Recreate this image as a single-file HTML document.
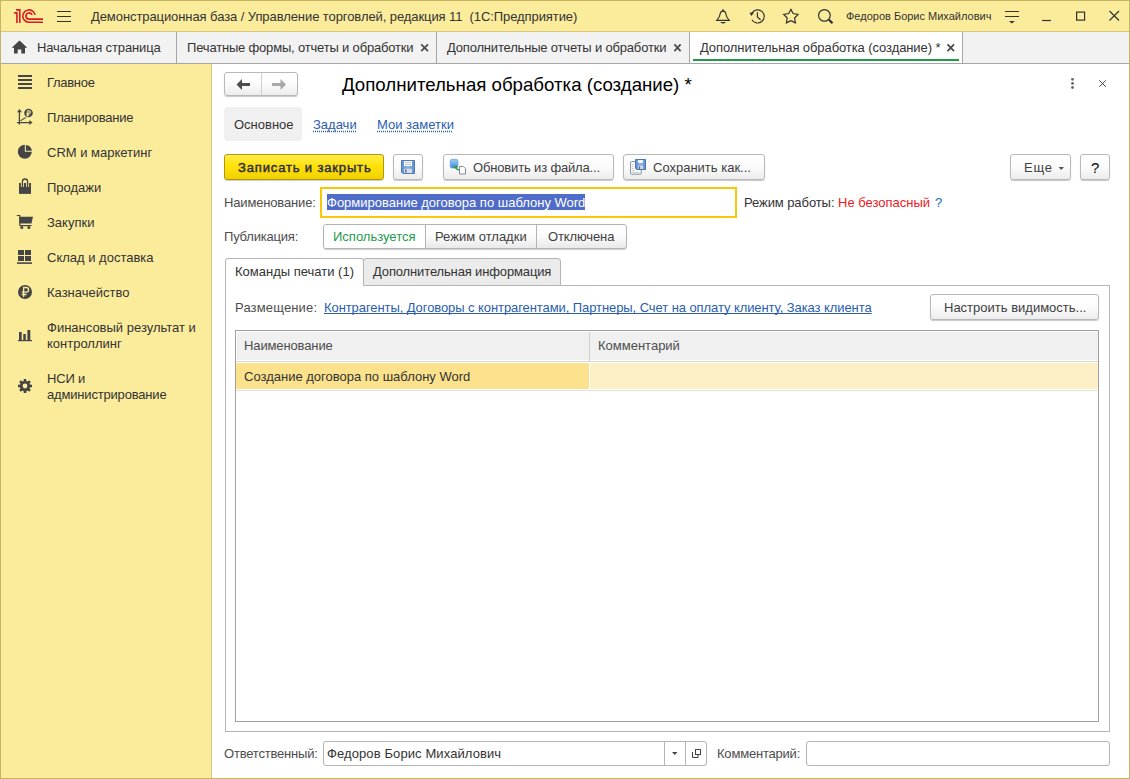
<!DOCTYPE html>
<html><head><meta charset="utf-8">
<style>
*{box-sizing:border-box;margin:0;padding:0}
html,body{width:1130px;height:779px;overflow:hidden;background:#fff}
body{font-family:"Liberation Sans",sans-serif;font-size:13px;line-height:15px;color:#333;position:relative}
.a{position:absolute;white-space:nowrap}
svg.a{overflow:visible}
#win{position:absolute;left:0;top:0;width:1130px;height:779px;border:1px solid #c6b563;pointer-events:none}
#title{position:absolute;left:0;top:0;width:1130px;height:32px;background:#fbec9c;border-bottom:1px solid #d9c77f}
#tabs{position:absolute;left:0;top:32px;width:1130px;height:32px;background:#f2f2f2;border-bottom:1px solid #a6a6a6}
#side{position:absolute;left:0;top:64px;width:212px;height:715px;background:#fbec9c;border-right:1px solid #d5c57d}
.sep{position:absolute;top:0;width:1px;height:31px;background:#a6a6a6}
.tt{position:absolute;top:8px;white-space:nowrap;color:#333}
.x{position:absolute;top:7px;font-size:15px;color:#4a4a4a}
.si{position:absolute;left:47px;color:#333;line-height:16px;white-space:nowrap}
.btn{position:absolute;border:1px solid #b8b8b8;border-radius:3px;background:linear-gradient(#ffffff 0%,#fbfbfb 50%,#ececec 100%);box-shadow:0 1px 1px rgba(0,0,0,.22);color:#333;white-space:nowrap}
.link{color:#2a5db0;text-decoration:underline;text-decoration-skip-ink:none}
.dlink{color:#2a5db0;text-decoration:underline dotted;text-underline-offset:2px;text-decoration-skip-ink:none}
</style></head>
<body>
<div id="title">
  <svg class="a" style="left:0;top:0" width="50" height="32" viewBox="0 0 50 32">
    <g fill="none" stroke="#d81d22" stroke-width="1.6" stroke-linecap="butt">
      <path d="M14.1,12.9 H16.9 V23"/>
      <path d="M16.1,9.9 H19.8 V23"/>
      <path d="M35.08,14.92 A6.2,6.2 0 1 0 29,22.3 H43"/>
      <path d="M32.09,15.11 A3.13,3.13 0 1 0 29.1,19.16 H43"/>
    </g>
  </svg>
  <svg class="a" style="left:0;top:0" width="90" height="32">
    <g stroke="#333" stroke-width="1.1">
      <path d="M57,11.5 H71 M57,16.5 H71 M57,21.5 H71"/>
    </g>
  </svg>
  <div class="a" style="left:91px;top:9px;color:#333;letter-spacing:-0.08px">Демонстрационная база / Управление торговлей, редакция 11&nbsp; (1С:Предприятие)</div>
  <!-- bell -->
  <svg class="a" style="left:0;top:0" width="1130" height="32">
    <g fill="none" stroke="#333" stroke-width="1.2">
      <path d="M716.8,20.3 C718.6,18.3 719.9,16.6 720.2,13.8 C720.4,12 721.4,11.2 723,11.2 C724.6,11.2 725.6,12 725.8,13.8 C726.1,16.6 727.4,18.3 729.2,20.3 Z"/>
      <!-- history -->
      <path d="M751.9,19.7 A6.6,6.6 0 1 0 752.2,12.6"/>
      <path d="M757.4,12.2 V16.9 L760.6,19.8"/>
      <!-- star -->
      <path d="M790.9,9.4 L793.1,13.5 L798.1,14.4 L794.6,18 L795.4,22.9 L790.9,20.6 L786.4,22.9 L787.2,18 L783.7,14.4 L788.7,13.5 Z"/>
      <!-- search -->
      <circle cx="824.4" cy="15.4" r="5.8"/>
    </g>
    <g fill="#333">
      <path d="M720.2,22 H726 Q723.1,25.2 720.2,22 Z"/>
      <circle cx="723" cy="10.2" r="1"/>
      <path d="M749.4,12.7 L754.2,12.3 L751.5,16 Z"/>
      <path d="M828.2,20.6 L829.8,19 L833.3,22.5 L831.7,24.1 Z"/>
      <path d="M1009,21 H1014.8 L1011.9,23.6 Z"/>
    </g>
    <g stroke="#333" stroke-width="1.2" fill="none">
      <path d="M1005,11.5 H1019 M1005,16.5 H1019"/>
      <path d="M1042,20.5 H1051"/>
      <rect x="1076.6" y="12.1" width="8" height="8"/>
      <path d="M1109.5,11 L1119,20.5 M1119,11 L1109.5,20.5"/>
    </g>
  </svg>
  <div class="a" style="left:846px;top:9px;font-size:11px;color:#333">Федоров Борис Михайлович</div>
</div>

<div id="tabs">
  <svg class="a" style="left:0;top:0" width="40" height="31">
    <path fill="#444" d="M19.5,8.5 L27.3,15.8 H25 V21.5 H21.3 V17.5 H17.7 V21.5 H14 V15.8 H11.7 Z"/>
  </svg>
  <div class="tt" style="left:37px;letter-spacing:-0.12px">Начальная страница</div>
  <div class="sep" style="left:176px"></div>
  <div class="tt" style="left:187px;letter-spacing:-0.18px">Печатные формы, отчеты и обработки</div>
  
  <div class="sep" style="left:436px"></div>
  <div class="tt" style="left:447px;letter-spacing:-0.18px">Дополнительные отчеты и обработки</div>
  
  <div class="sep" style="left:689px"></div>
  <div class="a" style="left:690px;top:0;width:272px;height:31px;background:#fff"></div>
  <div class="a" style="left:693px;top:27px;width:266px;height:2px;background:#1f9a4a"></div>
  <svg class="a" style="left:0;top:0" width="1130" height="31">
    <g stroke="#4d4d4d" stroke-width="1.8">
      <path d="M421.2,12.3 L428,19.1 M428,12.3 L421.2,19.1"/>
      <path d="M674.4,12.3 L680.6,19.1 M680.6,12.3 L674.4,19.1"/>
      <path d="M947.5,12.3 L954,19.1 M954,12.3 L947.5,19.1"/>
    </g>
  </svg>
  <div class="tt" style="left:700px;letter-spacing:-0.09px">Дополнительная обработка (создание) *</div>
  
  <div class="sep" style="left:962px"></div>
</div>

<div id="side">
  <svg class="a" style="left:0;top:0" width="212" height="340">
    <g fill="#454545">
      <!-- Главное -->
      <rect x="18" y="11" width="14" height="2"/><rect x="18" y="15" width="14" height="2"/><rect x="18" y="19" width="14" height="2"/><rect x="18" y="23" width="14" height="2"/>
      <!-- CRM pie -->
      <path d="M24.8,80.8 A7,7 0 1 0 31.8,87.8 H24.8 Z"/>
      <path d="M25.9,80.9 A5.9,5.9 0 0 1 31.8,86.8 H25.9 Z"/>
      <!-- bag -->
      <path d="M19,119 H31 V129.9 H19 Z"/>
      <!-- cart -->
      <path d="M19.5,152.8 H33 L31.5,159.6 H19.5 Z"/>
      <rect x="19.5" y="161" width="12" height="1.2"/>
      <circle cx="21.8" cy="163.6" r="1.5"/><circle cx="28.8" cy="163.6" r="1.5"/>
      <!-- warehouse -->
      <rect x="18" y="186" width="6" height="5"/><rect x="25" y="186" width="6" height="5"/>
      <rect x="18" y="192" width="6" height="5"/><rect x="25" y="192" width="6" height="5"/>
      <rect x="17" y="198.3" width="15" height="1.6"/>
      <!-- ruble -->
      <circle cx="25" cy="228" r="7"/>
      <!-- chart -->
      <rect x="19" y="268" width="2.7" height="8.5"/><rect x="23.3" y="270" width="2.5" height="6.5"/><rect x="27.4" y="266" width="2.9" height="10.5"/>
      <rect x="18" y="276" width="14" height="1.2"/>
      <!-- gear -->
      <g transform="translate(25,322)">
        <circle r="5.2"/>
        <rect x="-1.3" y="-7" width="2.6" height="14"/>
        <rect x="-1.3" y="-7" width="2.6" height="14" transform="rotate(45)"/>
        <rect x="-1.3" y="-7" width="2.6" height="14" transform="rotate(90)"/>
        <rect x="-1.3" y="-7" width="2.6" height="14" transform="rotate(135)"/>
      </g>
    </g>
    <circle cx="25" cy="322" r="2.4" fill="#fbec9c"/>
    <!-- bag handle -->
    <path d="M22.4,123 V117.6 A2.6,2.6 0 0 1 27.6,117.6 V123" fill="none" stroke="#fbec9c" stroke-width="3"/>
    <path d="M22.4,123 V117.6 A2.6,2.6 0 0 1 27.6,117.6 V123" fill="none" stroke="#454545" stroke-width="1.3"/>
    <path d="M16.8,151.5 H19.8 V161.5" fill="none" stroke="#454545" stroke-width="1.2"/>
    <!-- ruble sign -->
    <path d="M23.6,233 V223.5 H26.3 A2.3,2.3 0 0 1 26.3,228.1 H21.8 M21.8,230.5 H26.5" fill="none" stroke="#fbec9c" stroke-width="1.3"/>
    <!-- planning -->
    <g fill="none" stroke="#454545" stroke-width="1.3">
      <path d="M19.4,46 V60.5 M17,58.6 H30.5"/>
      <path d="M20.4,56.5 H21.8 V55.5 H23.2 V54.5 H24.6 V53.8 H26" stroke-width="0.9"/>
    </g>
    <g fill="#454545">
      <path d="M19.5,45 L17,48.2 H22 Z"/>
      <path d="M32.5,58.5 L29.3,56 V61 Z"/>
      <circle cx="28.5" cy="49" r="4.3"/>
    </g>
    <path d="M27.7,52.4 V46.7 H29.1 A1.3,1.3 0 0 1 29.1,49.3 H26.4 M26.3,50.9 H29.4" fill="none" stroke="#fbec9c" stroke-width="1.1"/>
  </svg>
  <div class="si" style="top:11px;letter-spacing:-0.3px">Главное</div>
  <div class="si" style="top:46px;letter-spacing:-0.2px">Планирование</div>
  <div class="si" style="top:81px">CRM и маркетинг</div>
  <div class="si" style="top:116px">Продажи</div>
  <div class="si" style="top:151px">Закупки</div>
  <div class="si" style="top:186px">Склад и доставка</div>
  <div class="si" style="top:221px">Казначейство</div>
  <div class="si" style="top:256px">Финансовый результат и<br>контроллинг</div>
  <div class="si" style="top:307px;letter-spacing:-0.18px">НСИ и<br>администрирование</div>
</div>

<div id="main">
  <!-- nav buttons -->
  <div class="btn" style="left:224px;top:72px;width:74px;height:24px"></div>
  <div class="a" style="left:261px;top:73px;width:1px;height:22px;background:#d0d0d0"></div>
  <svg class="a" style="left:0;top:0" width="300" height="100">
    <path fill="#4d4d4d" d="M236.5,84.5 L242,79 V83 H250 V86 H242 V90 Z"/>
    <path fill="#a8a8a8" d="M286,84.5 L280.5,79 V83 H272 V86 H280.5 V90 Z"/>
  </svg>
  <div class="a" style="left:342px;top:74px;font-size:18.67px;line-height:22px;color:#000;letter-spacing:0px">Дополнительная обработка (создание) *</div>
  <svg class="a" style="left:0;top:0" width="1130" height="100">
    <g fill="#666"><circle cx="1072.5" cy="79.3" r="1.4"/><circle cx="1072.5" cy="83.4" r="1.4"/><circle cx="1072.5" cy="87.5" r="1.4"/></g>
    <path d="M1099.3,80.3 L1105.9,86.9 M1105.9,80.3 L1099.3,86.9" stroke="#444" stroke-width="1"/>
  </svg>

  <!-- form tabs -->
  <div class="a" style="left:224px;top:107px;width:78px;height:34px;background:#f0f0f0;border-radius:4px"></div>
  <div class="a" style="left:234px;top:117px;color:#333">Основное</div>
  <div class="a dlink" style="left:313px;top:117px">Задачи</div>
  <div class="a dlink" style="left:377px;top:117px">Мои заметки</div>

  <!-- buttons row -->
  <div class="a" style="left:224px;top:154px;width:160px;height:26px;border:1px solid #ad9a06;border-radius:3px;background:linear-gradient(#ffed4a 0%,#ffe20a 45%,#f2d000 100%);box-shadow:0 1px 1px rgba(0,0,0,.2)"></div>
  <div class="a" style="left:238px;top:160px;color:#2d2d3d;-webkit-text-stroke:0.45px #2d2d3d;letter-spacing:0.85px">Записать и закрыть</div>
  <div class="btn" style="left:393px;top:154px;width:30px;height:26px"></div>
  <svg class="a" style="left:0;top:0" width="800" height="200">
    <!-- floppy -->
    <defs><linearGradient id="fg" x1="0" y1="0" x2="1" y2="0"><stop offset="0" stop-color="#5f8fd0"/><stop offset="0.5" stop-color="#8db6e8"/><stop offset="1" stop-color="#5f8fd0"/></linearGradient>
    <linearGradient id="dbg" x1="0" y1="0" x2="0" y2="1"><stop offset="0" stop-color="#9fd0f7"/><stop offset="1" stop-color="#3f87d6"/></linearGradient></defs>
    <path d="M401.5,160.5 H414.5 V173.5 H402.8 L401.5,172.2 Z" fill="url(#fg)" stroke="#4f78b5" stroke-width="1"/>
    <rect x="404" y="161" width="8" height="5" fill="#fff"/>
    <path d="M405,162.6 H411 M405,164.6 H411" stroke="#9ab" stroke-width="0.7"/>
    <rect x="404" y="168.8" width="8" height="4.2" fill="#d9dedb"/>
    <rect x="405" y="169.6" width="1.6" height="3" fill="#4f78b5"/>
  </svg>
  <div class="btn" style="left:443px;top:154px;width:171px;height:26px"></div>
  <svg class="a" style="left:0;top:0" width="800" height="200">
    <rect x="450.3" y="159.3" width="7.6" height="8.8" rx="1.8" fill="url(#dbg)" stroke="#5a9ad8" stroke-width="0.7"/>
    <path d="M459.5,166.5 H463.3 L465.5,168.7 V174 H459.5 Z" fill="#fff" stroke="#7d8c99" stroke-width="1"/>
    <path d="M455.3,167.2 Q456.5,169.5 459,169.8" fill="none" stroke="#2f9b35" stroke-width="1.3"/>
    <path d="M453.2,167.5 L456.6,165.2 L456.8,168.8 Z" fill="#2f9b35"/>
  </svg>
  <div class="a" style="left:473px;top:160px;color:#404040;letter-spacing:-0.16px">Обновить из файла...</div>
  <div class="btn" style="left:623px;top:154px;width:142px;height:26px"></div>
  <svg class="a" style="left:0;top:0" width="800" height="200">
    <rect x="630.6" y="161.6" width="10.6" height="12.6" rx="0.8" fill="#fff" stroke="#7f8f9c" stroke-width="1"/>
    <path d="M632,164.5 H633.5 M632,166.5 H633.5 M632,168.5 H633.5 M632,170.5 H634.5 M632,172.4 H639.5" stroke="#9aa5ad" stroke-width="0.6"/>
    <path d="M635.5,159.5 H645.5 V169.5 H636.5 L635.5,168.5 Z" fill="url(#fg)" stroke="#4a74b3" stroke-width="1"/>
    <rect x="638.1" y="160.2" width="4.9" height="2.6" fill="#fff"/>
    <rect x="638.1" y="165.6" width="4.9" height="3.4" fill="#d5dbd8"/>
    <rect x="638.8" y="166.3" width="1.3" height="2.7" fill="#4a74b3"/>
  </svg>
  <div class="a" style="left:653px;top:160px;color:#404040">Сохранить как...</div>
  <div class="btn" style="left:1010px;top:154px;width:61px;height:26px"></div>
  <div class="a" style="left:1024px;top:160px;color:#404040;letter-spacing:0.8px">Еще</div>
  <svg class="a" style="left:0;top:0" width="1130" height="200"><path d="M1058.5,167 H1064 L1061.25,170 Z" fill="#555"/></svg>
  <div class="btn" style="left:1080px;top:154px;width:30px;height:26px"></div>
  <div class="a" style="left:1091px;top:160px;font-size:15px;color:#111;-webkit-text-stroke:0.1px #111">?</div>

  <!-- Наименование -->
  <div class="a" style="left:224px;top:195px;color:#4d4d4d;letter-spacing:-0.16px">Наименование:</div>
  <div class="a" style="left:320px;top:187px;width:417px;height:31px;border:2px solid #f8c70a;background:#fff"></div>
  <div class="a" style="left:327px;top:194px;width:258px;height:16px;background:#4f6cc8"></div>
  <div class="a" style="left:327px;top:195px;color:#fff">Формирование договора по шаблону Word</div>
  <div class="a" style="left:744px;top:195px;color:#333;letter-spacing:-0.08px">Режим работы:</div>
  <div class="a" style="left:838px;top:195px;color:#ec1b24">Не безопасный</div>
  <div class="a" style="left:935px;top:195px;color:#1f6fc2;-webkit-text-stroke:0.12px #1f6fc2">?</div>

  <!-- Публикация -->
  <div class="a" style="left:224px;top:229px;color:#4d4d4d;letter-spacing:-0.2px">Публикация:</div>
  <div class="a" style="left:323px;top:224px;width:304px;height:25px;border:1px solid #b3b3b3;border-radius:3px;background:linear-gradient(#ffffff 0%,#fbfbfb 50%,#e9e9e9 100%);overflow:hidden;box-shadow:0 1px 1px rgba(0,0,0,.2)">
    <div class="a" style="left:0;top:0;width:102px;height:23px;background:#fff;border-right:1px solid #b3b3b3"></div>
    <div class="a" style="left:212px;top:0;width:1px;height:23px;background:#b3b3b3"></div>
  </div>
  <div class="a" style="left:333px;top:229px;color:#1e9b4e">Используется</div>
  <div class="a" style="left:435px;top:229px;color:#404040">Режим отладки</div>
  <div class="a" style="left:548px;top:229px;color:#404040;letter-spacing:-0.12px">Отключена</div>

  <!-- tabs -->
  <div class="a" style="left:225px;top:285px;width:885px;height:447px;border:1px solid #b5b5b5"></div>
  <div class="a" style="left:225px;top:258px;width:139px;height:28px;border:1px solid #b5b5b5;border-bottom:none;border-radius:3px 3px 0 0;background:#fff"></div>
  <div class="a" style="left:363px;top:258px;width:198px;height:28px;border:1px solid #b5b5b5;border-bottom:1px solid #b5b5b5;border-radius:3px 3px 0 0;background:#ebebeb"></div>
  <div class="a" style="left:235px;top:264px;color:#333">Команды печати (1)</div>
  <div class="a" style="left:373px;top:264px;color:#333;letter-spacing:-0.14px">Дополнительная информация</div>

  <div class="a" style="left:235px;top:300px;color:#4d4d4d;letter-spacing:0.15px">Размещение:</div>
  <div class="a link" style="left:324px;top:300px;letter-spacing:-0.08px">Контрагенты, Договоры с контрагентами, Партнеры, Счет на оплату клиенту, Заказ клиента</div>
  <div class="btn" style="left:930px;top:294px;width:169px;height:26px"></div>
  <div class="a" style="left:944px;top:300px;color:#404040">Настроить видимость...</div>

  <!-- table -->
  <div class="a" style="left:235px;top:330px;width:864px;height:392px;border:1px solid #a0a0a0;background:#fff"></div>
  <div class="a" style="left:237px;top:332px;width:861px;height:28px;background:#f0f0f0"></div>
  <div class="a" style="left:236px;top:361px;width:862px;height:1px;background:#d8d8d8"></div>
  <div class="a" style="left:589px;top:332px;width:1px;height:29px;background:#d0d0d0"></div>
  <div class="a" style="left:244px;top:338px;color:#4d4d4d;letter-spacing:-0.12px">Наименование</div>
  <div class="a" style="left:598px;top:338px;color:#4d4d4d">Комментарий</div>
  <div class="a" style="left:236px;top:363px;width:353px;height:26px;background:#fce28c"></div>
  <div class="a" style="left:590px;top:363px;width:508px;height:26px;background:#fdf0c6"></div>
  <div class="a" style="left:236px;top:390px;width:862px;height:1px;background:#e2e2e2"></div>
  <div class="a" style="left:244px;top:369px;color:#333">Создание договора по шаблону Word</div>

  <!-- bottom -->
  <div class="a" style="left:224px;top:746px;color:#4d4d4d;letter-spacing:-0.2px">Ответственный:</div>
  <div class="a" style="left:323px;top:741px;width:384px;height:25px;border:1px solid #b3b3b3;border-radius:3px;background:#fff"></div>
  <div class="a" style="left:664px;top:742px;width:1px;height:23px;background:#b3b3b3"></div>
  <div class="a" style="left:685px;top:742px;width:1px;height:23px;background:#b3b3b3"></div>
  <div class="a" style="left:327px;top:746px;color:#333;letter-spacing:0.1px">Федоров Борис Михайлович</div>
  <svg class="a" style="left:0;top:0" width="1130" height="779">
    <path d="M672,752 H677.5 L674.75,755 Z" fill="#444"/>
    <path d="M692.5,752 V757.5 H698 V755" fill="none" stroke="#444" stroke-width="1"/>
    <rect x="695.5" y="749.5" width="5" height="5" fill="none" stroke="#444" stroke-width="1"/>
  </svg>
  <div class="a" style="left:717px;top:746px;color:#4d4d4d;letter-spacing:-0.2px">Комментарий:</div>
  <div class="a" style="left:806px;top:741px;width:304px;height:25px;border:1px solid #b3b3b3;border-radius:3px;background:#fff"></div>
</div>
<div id="win"></div>
</body></html>
